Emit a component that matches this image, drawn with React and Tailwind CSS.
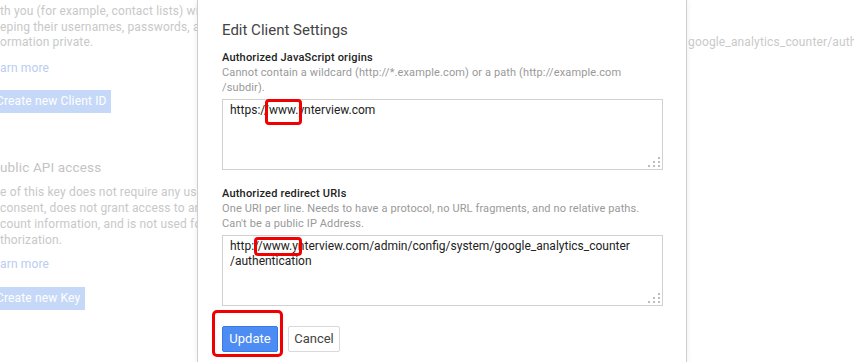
import React from "react";

const fadedLines1 = [
  "th you (for example, contact lists) wi",
  "eping their usernames, passwords, an",
  "ormation private.",
];

const fadedLines2 = [
  "e of this key does not require any use",
  "consent, does not grant access to any",
  "count information, and is not used fo",
  "thorization.",
];

const ResizeGrip = () => (
  <svg className="absolute bottom-[2px] right-[2px]" width="12" height="10" viewBox="0 0 12 10">
    <g fill="#bdbdbd">
      <rect x="10" y="0" width="2" height="2" />
      <rect x="5" y="4" width="2" height="2" />
      <rect x="10" y="4" width="2" height="2" />
      <rect x="0" y="8" width="2" height="2" />
      <rect x="5" y="8" width="2" height="2" />
      <rect x="10" y="8" width="2" height="2" />
    </g>
  </svg>
);

const Field = ({ label, help, lines, className = "" }) => (
  <div className={className}>
    <div className="text-[11px] leading-[15px] font-medium tracking-[0.2px] text-[#222]">{label}</div>
    <div className="text-[11px] leading-[15px] tracking-[0.12px] text-[#999]">
      {help.map((h) => (
        <div key={h} className="whitespace-nowrap">{h}</div>
      ))}
    </div>
    <div className="relative mt-[4px] h-[71px] w-[441px] border border-[#d0d0d0] bg-white px-[7px] pt-[3px]">
      {lines.map((l) => (
        <div key={l} className="whitespace-nowrap text-[12px] leading-[15px] text-[#222]">{l}</div>
      ))}
      <ResizeGrip />
    </div>
  </div>
);

export default function App() {
  return (
    <div className="flex h-[362px] w-[854px] overflow-hidden bg-white font-['Roboto',sans-serif]">
      {/* faded page behind the dialog, left */}
      <div className="w-[197px] shrink-0 overflow-hidden pt-[4px] text-[12px] tracking-[0.15px] text-[#c8c8c8]">
        <div className="leading-[15.5px]">
          {fadedLines1.map((l) => (
            <div key={l} className="whitespace-nowrap">{l}</div>
          ))}
        </div>
        <div className="mt-[9px] whitespace-nowrap leading-[16px] text-[#b9cdf0]">arn more</div>
        <div className="mt-[14px] flex h-[23px] w-[111px] items-center overflow-hidden whitespace-nowrap bg-[#c6d8f7] text-white">
          <span className="-ml-[4px]">Create new Client ID</span>
        </div>
        <div className="mt-[44px] whitespace-nowrap text-[13.5px] leading-[20px] text-[#c4c4c4]">ublic API access</div>
        <div className="mt-[7px] leading-[16px]">
          {fadedLines2.map((l) => (
            <div key={l} className="whitespace-nowrap">{l}</div>
          ))}
        </div>
        <div className="mt-[8px] whitespace-nowrap leading-[16px] text-[#b9cdf0]">arn more</div>
        <div className="mt-[15px] flex h-[23px] w-[85px] items-center overflow-hidden whitespace-nowrap bg-[#c6d8f7] text-white">
          <span className="-ml-[4px]">Create new Key</span>
        </div>
      </div>

      {/* dialog */}
      <div className="relative w-[490px] shrink-0 border-x border-[#cfcfcf] bg-white pl-[24px] pr-[23px] pt-[20px] shadow-[0_0_6px_rgba(0,0,0,0.08)]">
        <h2 className="text-[15px] leading-[20px] text-[#444]">Edit Client Settings</h2>

        <Field
          className="mt-[10px]"
          label="Authorized JavaScript origins"
          help={["Cannot contain a wildcard (http://*.example.com) or a path (http://example.com", "/subdir)."]}
          lines={["https://www.ynterview.com"]}
        />

        <Field
          className="mt-[16px]"
          label="Authorized redirect URIs"
          help={["One URI per line. Needs to have a protocol, no URL fragments, and no relative paths.", "Can't be a public IP Address."]}
          lines={["http://www.ynterview.com/admin/config/system/google_analytics_counter", "/authentication"]}
        />

        <div className="mt-[20px] flex gap-[10px]">
          <button className="h-[26px] w-[56px] rounded-[2px] border border-[#3b78e7] bg-[#4d8cf2] text-[13px] text-white">Update</button>
          <button className="h-[26px] w-[52px] rounded-[2px] border border-[#d9d9d9] bg-white text-[13px] text-[#444]">Cancel</button>
        </div>

        {/* red annotation boxes */}
        <div className="absolute left-[67px] top-[99px] h-[26px] w-[37px] rounded-[4px] border-[3px] border-[#f00000]" />
        <div className="absolute left-[56px] top-[237px] h-[19px] w-[48px] rounded-[4px] border-[3px] border-[#f00000]" />
        <div className="absolute left-[14px] top-[310px] h-[47px] w-[71px] rounded-[5px] border-[3px] border-[#f00000]" />
      </div>

      {/* faded page behind the dialog, right */}
      <div className="flex-1 overflow-hidden pt-[34px] text-[12px] leading-[16px] tracking-[0.15px] text-[#cacaca]">
        <div className="whitespace-nowrap pl-[1px]">google_analytics_counter/authentication</div>
      </div>
    </div>
  );
}
